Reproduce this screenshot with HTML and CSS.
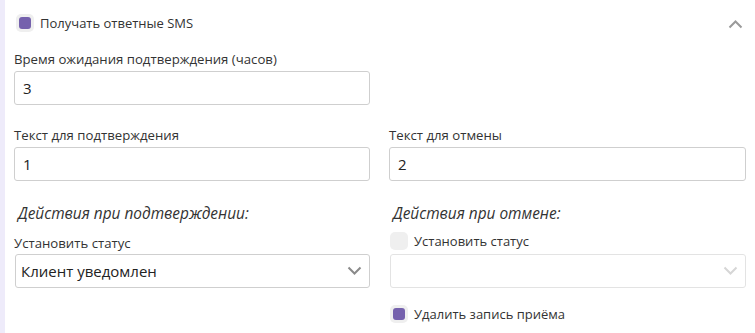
FILE: index.html
```html
<!DOCTYPE html>
<html>
<head>
    <title>SMS</title>
    <link rel="stylesheet" href="styles.css">
</head>
<body>
    <div class="panel">
        <div class="panel-head">
            <label class="check">
                <span class="box checked"></span>
                <span>Получать ответные SMS</span>
            </label>
            <svg class="chevron-up" width="15" height="10" viewBox="0 0 15 10">
                <path d="M1.5 8.5 L7.5 2.5 L13.5 8.5" fill="none" stroke="#9a9a9a" stroke-width="2"/>
            </svg>
        </div>

        <div class="field half">
            <label class="field-label">Время ожидания подтверждения (часов)</label>
            <div class="control">3</div>
        </div>

        <div class="row texts">
            <div class="field">
                <label class="field-label">Текст для подтверждения</label>
                <div class="control">1</div>
            </div>
            <div class="field">
                <label class="field-label">Текст для отмены</label>
                <div class="control">2</div>
            </div>
        </div>

        <div class="row actions">
            <div class="col">
                <h4 class="section-title">Действия при подтверждении:</h4>
                <label class="field-label status-label">Установить статус</label>
                <div class="control select">
                    <span class="select-value">Клиент уведомлен</span>
                    <svg width="15" height="10" viewBox="0 0 15 10">
                        <path d="M1.5 1.5 L7.5 7.5 L13.5 1.5" fill="none" stroke="#8a8a8a" stroke-width="2"/>
                    </svg>
                </div>
            </div>
            <div class="col">
                <h4 class="section-title">Действия при отмене:</h4>
                <label class="check status-check">
                    <span class="box"></span>
                    <span>Установить статус</span>
                </label>
                <div class="control select disabled">
                    <span class="select-value"></span>
                    <svg width="15" height="10" viewBox="0 0 15 10">
                        <path d="M1.5 1.5 L7.5 7.5 L13.5 1.5" fill="none" stroke="#d6d6d6" stroke-width="2"/>
                    </svg>
                </div>
                <label class="check delete-check">
                    <span class="box checked"></span>
                    <span>Удалить запись приёма</span>
                </label>
            </div>
        </div>
    </div>
</body>
</html>
```

FILE: styles.css
```css
body {
    margin: 0;
    font-family: "Open Sans", Arial, sans-serif;
    color: #333;
    background: #fff;
}
.panel {
    border-left: 5px solid #eeebfa;
    min-height: 333px;
    box-sizing: border-box;
    padding: 14px 9px 0 9px;
}
.panel-head {
    display: flex;
    justify-content: space-between;
    align-items: center;
    height: 18px;
    padding-left: 2px;
}
.chevron-up {
    margin-right: 3px;
    margin-top: 2px;
}
.check {
    display: flex;
    align-items: center;
    gap: 6px;
    font-size: 13px;
    line-height: 18px;
    color: #333;
}
.box {
    width: 18px;
    height: 18px;
    border-radius: 5px;
    background: #efefef;
    display: flex;
    align-items: center;
    justify-content: center;
}
.box.checked::after {
    content: "";
    width: 12px;
    height: 12px;
    border-radius: 3px;
    background: #7561ad;
}
.field-label {
    display: block;
    font-size: 13.2px;
    line-height: 18px;
    margin-bottom: 3px;
    color: #333;
}
.field.half {
    width: 356px;
    margin-top: 18px;
}
.control {
    box-sizing: border-box;
    height: 34px;
    border: 1px solid #cfcfcf;
    border-radius: 3px;
    padding: 0 8px;
    display: flex;
    align-items: center;
    font-size: 15px;
    color: #222;
}
.row {
    display: grid;
    grid-template-columns: 356px 357px;
    column-gap: 19px;
}
.row.texts {
    margin-top: 21px;
}
.row.actions {
    margin-top: 23px;
}
.section-title {
    margin: 0 0 0 4px;
    font-size: 15.4px;
    font-weight: normal;
    font-style: italic;
    line-height: 20px;
    color: #333;
}
.col .select {
    margin-left: 1px;
    justify-content: space-between;
    padding: 0 7px 0 5px;
}
.status-label {
    margin-top: 10px;
    margin-bottom: 2px;
}
.status-check {
    margin-top: 8px;
    margin-left: 1px;
    margin-bottom: 4px;
}
.select.disabled {
    border-color: #e3e3e3;
}
.delete-check {
    margin-top: 17px;
    margin-left: 1px;
}
```
